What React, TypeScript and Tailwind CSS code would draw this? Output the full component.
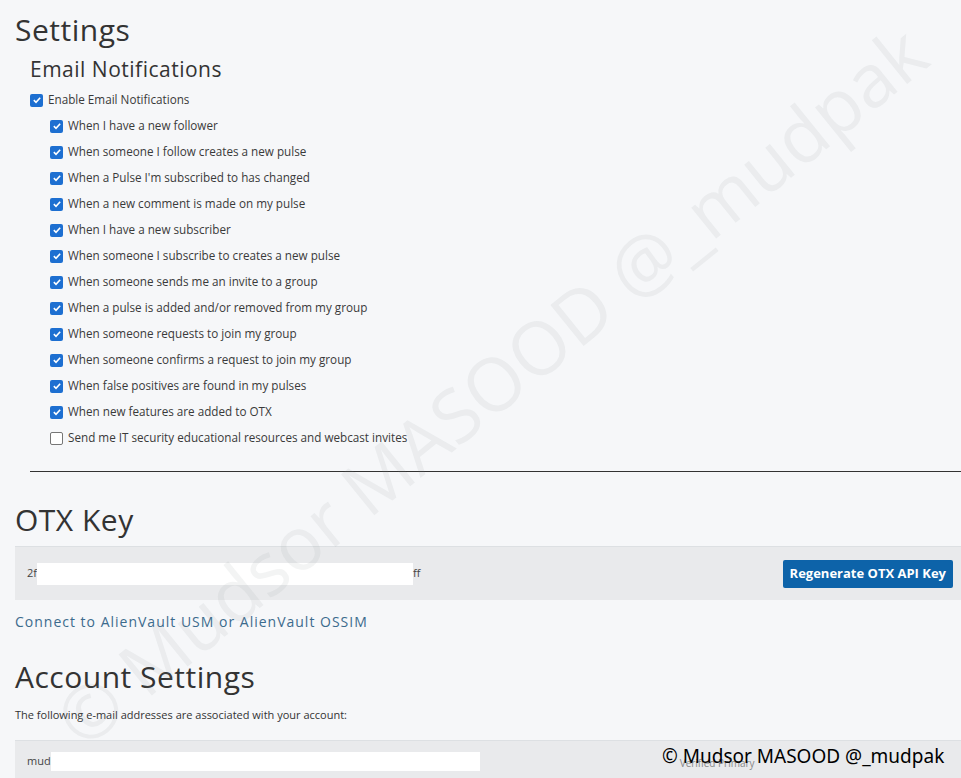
import React from "react";

const options = [
  { label: "When I have a new follower", checked: true },
  { label: "When someone I follow creates a new pulse", checked: true },
  { label: "When a Pulse I'm subscribed to has changed", checked: true },
  { label: "When a new comment is made on my pulse", checked: true },
  { label: "When I have a new subscriber", checked: true },
  { label: "When someone I subscribe to creates a new pulse", checked: true },
  { label: "When someone sends me an invite to a group", checked: true },
  { label: "When a pulse is added and/or removed from my group", checked: true },
  { label: "When someone requests to join my group", checked: true },
  { label: "When someone confirms a request to join my group", checked: true },
  { label: "When false positives are found in my pulses", checked: true },
  { label: "When new features are added to OTX", checked: true },
  { label: "Send me IT security educational resources and webcast invites", checked: false },
];

const Box = ({ checked }: { checked: boolean }) =>
  checked ? (
    <span className="flex h-[13px] w-[13px] shrink-0 items-center justify-center rounded-[2px] bg-[#1d6fd1]">
      <svg viewBox="0 0 12 12" className="h-[10px] w-[10px]">
        <path d="M2.2 6.2 L4.8 8.7 L9.8 3.2" fill="none" stroke="white" strokeWidth="1.9" />
      </svg>
    </span>
  ) : (
    <span className="h-[13px] w-[13px] shrink-0 rounded-[2px] border border-[#767676] bg-white" />
  );

const Row = ({ label, checked }: { label: string; checked: boolean }) => (
  <label className="flex h-[26px] items-center gap-[5px] text-[11.7px] text-[#3a3a3a]">
    <Box checked={checked} />
    <span>{label}</span>
  </label>
);

export default function App() {
  return (
    <div
      className="relative min-h-screen overflow-hidden bg-[#f6f7f9] text-[#333]"
      style={{ fontFamily: "'Open Sans', 'Noto Sans', sans-serif" }}
    >
      {/* Settings */}
      <h1 className="pl-[15px] pt-[10px] text-[30px] leading-[40px] tracking-[0.5px] text-[#333]">
        Settings
      </h1>

      <div className="pl-[30px]">
        <h2 className="mt-[5px] text-[21px] font-medium leading-[28px] tracking-[0.5px] text-[#333]">
          Email Notifications
        </h2>
        <div className="mt-[4px]">
          <Row label="Enable Email Notifications" checked={true} />
          <div className="pl-[20px]">
            {options.map((o) => (
              <Row key={o.label} label={o.label} checked={o.checked} />
            ))}
          </div>
        </div>
        <hr className="mt-[20px] border-t border-[#333]" />
      </div>

      {/* OTX Key */}
      <h1 className="mt-[28px] pl-[15px] text-[30px] leading-[40px] tracking-[0.5px] text-[#333]">
        OTX Key
      </h1>
      <div className="ml-[15px] mt-[6px] flex h-[54px] items-center justify-between border-t border-[#dde0e3] bg-[#e9eaec] pl-[12px] pr-[8px]">
        <div className="flex items-center text-[11px] text-[#444]">
          <span>2f</span>
          <span className="h-[22px] w-[376px] bg-white" />
          <span>ff</span>
        </div>
        <button className="h-[28px] rounded-[2px] bg-[#0d63a9] px-[7px] text-[13px] font-bold text-white">
          Regenerate OTX API Key
        </button>
      </div>
      <a className="mt-[11px] block pl-[15px] text-[14px] font-medium tracking-[1px] text-[#3c6b8d]">
        Connect to AlienVault USM or AlienVault OSSIM
      </a>

      {/* Account Settings */}
      <h1 className="mt-[25px] pl-[15px] text-[30px] leading-[40px] tracking-[0.5px] text-[#333]">
        Account Settings
      </h1>
      <p className="mt-[10px] pl-[15px] text-[11px] text-[#333]">
        The following e-mail addresses are associated with your account:
      </p>
      <div className="ml-[15px] mt-[16px] flex h-[60px] items-start gap-[200px] border-t border-[#dde0e3] bg-[#e9eaec] pl-[12px] pt-[11px]">
        <div className="flex items-center text-[11px] text-[#444]">
          <span>mud</span>
          <span className="h-[19px] w-[429px] bg-white" />
        </div>
        <span className="pt-[4px] text-[10px] text-[#888]">Verified Primary</span>
      </div>

      {/* watermark */}
      <div className="pointer-events-none absolute left-[490px] top-[385px] -translate-x-1/2 -translate-y-1/2 -rotate-[39deg] whitespace-nowrap text-[74px] text-[#8a8f96]/10">
        © Mudsor MASOOD @_mudpak
      </div>
      <div className="pointer-events-none absolute left-[662px] top-[742px] whitespace-nowrap text-[19px] text-black" style={{ fontFamily: "'Noto Sans', sans-serif" }}>
        © Mudsor MASOOD @_mudpak
      </div>
    </div>
  );
}
